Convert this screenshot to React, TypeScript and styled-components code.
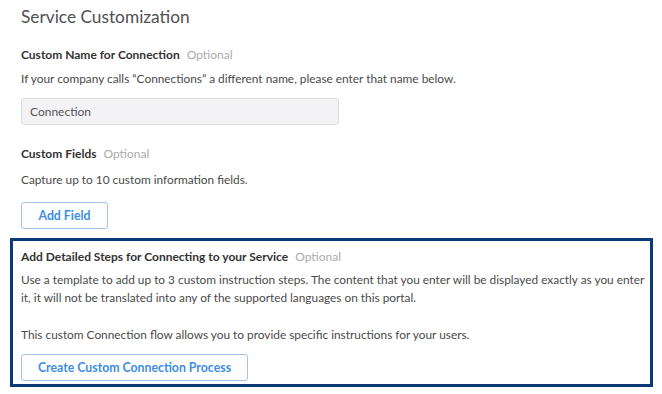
import styled, { createGlobalStyle } from "styled-components";

const GlobalStyle = createGlobalStyle`
  body {
    margin: 0;
    background: #ffffff;
    font-family: Lato, "Open Sans", Arial, sans-serif;
    color: #4a4a4a;
  }
`;

const Page = styled.div`
  display: flex;
  flex-direction: column;
  padding: 7px 9px 0 21px;
  width: 662px;
  box-sizing: border-box;
`;

const Title = styled.h1`
  margin: 0 0 19px;
  font-size: 17.3px;
  line-height: 20px;
  font-weight: 400;
  color: #505050;
`;

const Label = styled.div`
  font-size: 12px;
  line-height: 18px;
  font-weight: 700;
  color: #333333;
`;

const Optional = styled.span`
  font-weight: 400;
  color: #ababab;
  margin-left: 7px;
`;

const Desc = styled.p<{ $gap?: number; $after?: number }>`
  margin: ${(p) => p.$gap ?? 6}px 0 ${(p) => p.$after ?? 10}px;
  font-size: 11.85px;
  line-height: 18px;
  color: #4a4a4a;
`;

const NameInput = styled.input`
  width: 318px;
  height: 27px;
  box-sizing: border-box;
  padding: 0 8px;
  background: #f3f3f5;
  border: 1px solid #dddddd;
  border-radius: 3px;
  font-family: inherit;
  font-size: 12px;
  color: #555555;
  margin-bottom: 20px;
`;

const OutlineButton = styled.button<{ $width: number }>`
  align-self: flex-start;
  width: ${(p) => p.$width}px;
  height: 27px;
  background: #ffffff;
  border: 1px solid #9fc4ee;
  border-radius: 3px;
  font-family: inherit;
  font-size: 12.3px;
  font-weight: 700;
  color: #3d8ee2;
  cursor: pointer;
`;

const StepsBox = styled.section`
  display: flex;
  flex-direction: column;
  margin: 9px 0 0 -11px;
  padding: 7px 3px 3px 8px;
  border: 3px solid #0b3a78;
`;

export default function App() {
  return (
    <>
      <GlobalStyle />
      <Page>
        <Title>Service Customization</Title>

        <Label>
          Custom Name for Connection<Optional>Optional</Optional>
        </Label>
        <Desc>
          If your company calls “Connections” a different name, please enter
          that name below.
        </Desc>
        <NameInput defaultValue="Connection" />

        <Label>
          Custom Fields<Optional>Optional</Optional>
        </Label>
        <Desc $gap={8} $after={13}>
          Capture up to 10 custom information fields.
        </Desc>
        <OutlineButton $width={87}>Add Field</OutlineButton>

        <StepsBox>
          <Label>
            Add Detailed Steps for Connecting to your Service
            <Optional>Optional</Optional>
          </Label>
          <Desc $gap={5} $after={19}>
            Use a template to add up to 3 custom instruction steps. The content
            that you enter will be displayed exactly as you enter it, it will
            not be translated into any of the supported languages on this
            portal.
          </Desc>
          <Desc $gap={0} $after={10}>
            This custom Connection flow allows you to provide specific
            instructions for your users.
          </Desc>
          <OutlineButton $width={227}>Create Custom Connection Process</OutlineButton>
        </StepsBox>
      </Page>
    </>
  );
}
